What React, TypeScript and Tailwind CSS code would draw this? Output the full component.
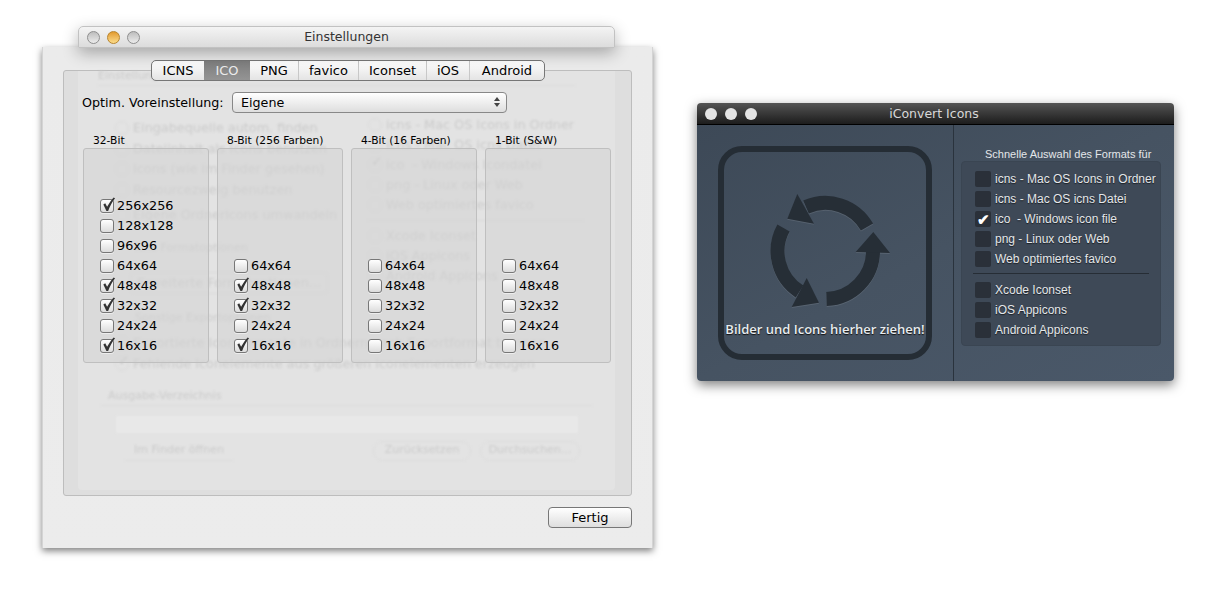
import React from 'react';

const ui = "font-['DejaVu_Sans',sans-serif]";

const TABS = [
  { label: 'ICNS', width: 'w-[52px]' },
  { label: 'ICO', width: 'w-[46px]', active: true },
  { label: 'PNG', width: 'w-[48px]' },
  { label: 'favico', width: 'w-[60px]' },
  { label: 'Iconset', width: 'w-[68px]' },
  { label: 'iOS', width: 'w-[43px]' },
  { label: 'Android', width: 'w-[75px]' },
];

const COLUMNS = [
  {
    title: '32-Bit',
    sizes: ['256x256', '128x128', '96x96', '64x64', '48x48', '32x32', '24x24', '16x16'],
    checked: ['256x256', '48x48', '32x32', '16x16'],
  },
  {
    title: '8-Bit (256 Farben)',
    sizes: ['64x64', '48x48', '32x32', '24x24', '16x16'],
    checked: ['48x48', '32x32', '16x16'],
  },
  { title: '4-Bit (16 Farben)', sizes: ['64x64', '48x48', '32x32', '24x24', '16x16'], checked: [] },
  { title: '1-Bit (S&W)', sizes: ['64x64', '48x48', '32x32', '24x24', '16x16'], checked: [] },
];

function CheckBox({ checked }: { checked: boolean }) {
  return (
    <span className="relative block w-[14px] h-[14px] shrink-0 rounded-[3px] border border-[#777] bg-linear-to-b from-white to-[#dcdcdc] shadow-[0_1px_0_rgba(255,255,255,0.5)]">
      {checked && (
        <svg viewBox="0 0 16 18" className="absolute left-0 -top-[5px] w-[15px] h-[17px]">
          <path d="M2.5 10 L4.5 8.8 L6.5 12.5 C8.5 9 10.5 5.5 13.5 2.5 L15 3.3 C12 7 9.5 12 7.6 17 L5.8 17 Z" fill="#333" />
        </svg>
      )}
    </span>
  );
}

function Traffic({ color }: { color: 'gray' | 'orange' }) {
  return (
    <span
      className={
        color === 'orange'
          ? 'block w-[13px] h-[13px] rounded-full border border-[#b8842c] bg-linear-to-b from-[#e29a2a] to-[#fbdc88]'
          : 'block w-[13px] h-[13px] rounded-full border border-[#8e8e8e] bg-linear-to-b from-[#bdbdbd] to-[#ececec]'
      }
    />
  );
}

function GhostRow({ text, checked, className }: { text: string; checked?: boolean; className?: string }) {
  return (
    <div className={`flex items-center h-[20px] gap-[4px] ${className ?? ''}`}>
      <span className="relative block w-[14px] h-[14px] rounded-full border border-[#dadada] shrink-0">
        {checked && <span className="absolute left-[2px] -top-[5px] text-[14px] leading-none text-[#c4c4c4]">✓</span>}
      </span>
      <span className="whitespace-pre">{text}</span>
    </div>
  );
}

// blurred main window that shows through behind the sheet
function GhostWindow() {
  return (
    <div className="absolute left-[14px] right-[16px] top-0 bottom-[5px] rounded-b-[4px] bg-[#e3e3e3]">
      <div className="blur-[1px] text-[12.8px] text-[#cbcbcb] h-full">
        <div className="pl-[20px] h-[10px] text-[11px] leading-[10px]">Einstellungen</div>
        <div className="ml-[20px] mr-[40px] mt-[4px] h-px bg-[#dcdcdc]" />
        <div className="flex">
          <div className="w-[290px] pl-[37px] pt-[32px] shrink-0">
            <GhostRow text="Eingabequelle autom. finden" />
            <GhostRow text="Dateiinhalt als Icons benutzen" className="mt-[1px]" />
            <GhostRow text="Icons (wie im Finder gesehen)" />
            <GhostRow text="Resourcezweig benutzen" className="mt-[1px]" />
            <GhostRow text="Eigene Ordnericons umwandeln" className="mt-[5px]" />
          </div>
          <div className="pt-[29px]">
            <GhostRow text="icns - Mac OS Icons in Ordner" className="gap-[3px]" />
            <GhostRow text="icns - Mac OS icns Datei" className="gap-[3px]" />
            <GhostRow text="ico  - Windows Icondatei" checked className="gap-[3px]" />
            <GhostRow text="png - Linux oder Web" className="gap-[3px]" />
            <GhostRow text="Web optimiertes favico" className="gap-[3px]" />
            <div className="h-px w-[215px] bg-[#d8d8d8] mt-[5px]" />
            <GhostRow text="Xcode Iconset" className="mt-[5px] gap-[3px]" />
            <GhostRow text="iOS Appicons" className="gap-[3px]" />
            <GhostRow text="Android Appicons" className="gap-[3px]" />
          </div>
        </div>
        <div className="-mt-[46px] pl-[57px] text-[11px]">Icns Formatoptionen</div>
        <div className="mt-[15px] ml-[52px] w-[198px] h-[22px] rounded-[4px] border border-[#dadada] flex items-center justify-center whitespace-nowrap">
          Erweiterte Formatoptionen...
        </div>
        <div className="mt-[16px] pl-[57px] text-[11px]">Sonstige Exportoptionen</div>
        <div className="mt-[7px] pl-[37px]">
          <GhostRow text="Exportierte Iconelemente in Ordnern nach Exportformat trennen" />
          <GhostRow text="Fehlende Iconelemente aus größeren Iconelementen erzeugen" checked className="mt-[1px]" />
        </div>
        <div className="mt-[14px] pl-[30px] text-[11px]">Ausgabe-Verzeichnis</div>
        <div className="mx-[23px] h-px bg-[#dcdcdc]" />
        <div className="mt-[10px] ml-[38px] w-[462px] h-[17px] bg-[#e8e8e8]" />
        <div className="mt-[8px] ml-[47px] w-[455px] flex items-center text-[11px]">
          <span className="w-[108px] h-[20px] flex items-center justify-center border-b border-[#dcdcdc]">Im Finder öffnen</span>
          <span className="ml-auto w-[98px] h-[20px] flex items-center justify-center rounded-[10px] border border-[#dcdcdc]">Zurücksetzen</span>
          <span className="ml-[9px] w-[100px] h-[20px] flex items-center justify-center rounded-[10px] border border-[#dcdcdc]">Durchsuchen...</span>
        </div>
      </div>
    </div>
  );
}

function SettingsSheet() {
  return (
    <div className={`absolute left-[42px] top-[47px] w-[611px] h-[501px] flex flex-col pl-[20px] pt-[23px] bg-linear-to-b from-[#ebebeb] to-[#ececec] border-x border-[#d4d4d4] shadow-[0_3px_7px_rgba(0,0,0,0.5)] text-black ${ui}`}>
      <div className="relative w-[569px] h-[426px] rounded-[3px] border border-[#bdbdbd] bg-[#dedede] flex flex-col">
        <GhostWindow />

        <div className="relative self-center ml-[1px] -mt-[11px] flex h-[21px] rounded-[5px] border border-[#777] bg-linear-to-b from-white to-[#e4e4e4] overflow-hidden text-[13px]">
          {TABS.map((tab, i) => (
            <div
              key={tab.label}
              className={`${tab.width} flex items-center justify-center ${
                tab.active
                  ? 'bg-linear-to-b from-[#7d7d7d] to-[#949494] text-[#ececec]'
                  : i > 2
                    ? 'border-l border-[#c8c8c8]'
                    : ''
              }`}
            >
              {tab.label}
            </div>
          ))}
        </div>

        <div className="relative flex items-center mt-[11px] pl-[18px] h-[21px]">
          <span className="w-[150px] text-[12.7px] whitespace-nowrap">Optim. Voreinstellung:</span>
          <div className="relative w-[275px] h-[21px] rounded-[4px] border border-[#888] bg-linear-to-b from-white to-[#dedede] flex items-center pl-[8px] text-[12.7px]">
            Eigene
            <span className="absolute right-[6px] top-[4px] flex flex-col gap-[2px]">
              <span className="block w-0 h-0 border-x-[3px] border-x-transparent border-b-[4px] border-b-[#444]" />
              <span className="block w-0 h-0 border-x-[3px] border-x-transparent border-t-[4px] border-t-[#444]" />
            </span>
          </div>
        </div>

        <div className="relative grid grid-cols-[126px_126px_126px_126px] gap-x-[8px] ml-[19px] mt-[20px]">
          {COLUMNS.map((col) => (
            <div key={col.title} className="flex flex-col">
              <div className="h-[15px] pl-[10px] text-[10.7px] leading-[16px] whitespace-nowrap">{col.title}</div>
              <div className="h-[215px] rounded-[3px] border border-[#bfbfbf] bg-[#d3d3d3]/60 flex flex-col justify-end pb-[6px] pl-[16px]">
                {col.sizes.map((size) => (
                  <div key={size} className="h-[20px] flex items-center text-[12.8px]">
                    <CheckBox checked={col.checked.includes(size)} />
                    <span className="ml-[3px]">{size}</span>
                  </div>
                ))}
              </div>
            </div>
          ))}
        </div>
      </div>

      <button className="self-end mr-[20px] mt-[11px] w-[84px] h-[21px] rounded-[4px] border border-[#777] bg-linear-to-b from-white to-[#dedede] text-[13px] flex items-center justify-center">
        Fertig
      </button>
    </div>
  );
}

function SettingsTitle() {
  return (
    <div className={`absolute left-[78px] top-[26px] w-[537px] h-[22px] rounded-t-[5px] border border-[#c2c2c2] bg-linear-to-b from-[#f4f4f4] to-[#dcdcdc] shadow-[0_5px_16px_rgba(0,0,0,0.3)] flex items-center pl-[8px] gap-[7px] ${ui}`}>
      <Traffic color="gray" />
      <Traffic color="orange" />
      <Traffic color="gray" />
      <span className="absolute inset-x-0 text-center text-[12.5px] text-[#333]">Einstellungen</span>
    </div>
  );
}

function ConvertArrows() {
  return (
    <svg viewBox="0 0 120 120" className="block mx-auto w-[120px] h-[120px] overflow-visible drop-shadow-[0_1px_0_rgba(255,255,255,0.1)]">
      <g fill="none" stroke="#262e36" strokeWidth="14">
        <path d="M102 36 A48 48 0 0 0 41 16" />
        <path d="M18.5 37 A48 48 0 0 0 34.5 100.5" />
        <path d="M61.5 108 A48 48 0 0 0 108 60" />
      </g>
      <g fill="#262e36">
        <polygon points="22.3,27.7 32.3,3 49,32.7" />
        <polygon points="41.7,87 26.7,116 54,111.7" />
        <polygon points="90.7,61 125,62 108.3,41" />
      </g>
    </svg>
  );
}

const FORMATS_TOP = [
  { label: 'icns - Mac OS Icons in Ordner' },
  { label: 'icns - Mac OS icns Datei' },
  { label: 'ico  - Windows icon file', checked: true },
  { label: 'png - Linux oder Web' },
  { label: 'Web optimiertes favico' },
];
const FORMATS_BOTTOM = [{ label: 'Xcode Iconset' }, { label: 'iOS Appicons' }, { label: 'Android Appicons' }];

function FormatRow({ label, checked }: { label: string; checked?: boolean }) {
  return (
    <div className="h-[20px] flex items-center">
      <span className="w-[16px] h-[16px] rounded-[2px] bg-[#2a3039] flex items-center justify-center shrink-0 text-white text-[15px] font-bold leading-none">
        {checked ? '✔' : ''}
      </span>
      <span className="ml-[4px] whitespace-pre text-[12px] text-[#e4e7ea] [text-shadow:0_1px_1px_rgba(0,0,0,0.6)]">{label}</span>
    </div>
  );
}

function IConvertWindow() {
  return (
    <div className="absolute left-[697px] top-[103px] w-[477px] h-[278px] rounded-[4px] overflow-hidden shadow-[0_4px_12px_rgba(0,0,0,0.5)] flex flex-col">
      <div className="relative h-[22px] shrink-0 flex items-center pl-[8px] gap-[8px] bg-linear-to-b from-[#555] to-[#1d1d1d] border-b border-black">
        <span className="block w-[12px] h-[12px] rounded-full bg-[#e4e4e4]" />
        <span className="block w-[12px] h-[12px] rounded-full bg-[#e4e4e4]" />
        <span className="block w-[12px] h-[12px] rounded-full bg-[#e4e4e4]" />
        <span className={`absolute inset-x-0 pr-[3px] translate-y-[1px] text-center text-[12.5px] text-[#d8d8d8] ${ui}`}>iConvert Icons</span>
      </div>
      <div className="flex-1 flex bg-linear-to-br from-[#3d4957] via-[#465362] to-[#4a5869]">
        <div className="w-[257px] border-r border-[#2a333d] pl-[21px] pt-[21px]">
          <div className="w-[214px] h-[214px] rounded-[24px] border-[6px] border-[#252d35] pt-[39px]">
            <ConvertArrows />
            <div className="mt-[9px] text-center font-['Open_Sans',sans-serif] text-[13px] leading-[18px] font-semibold whitespace-nowrap text-[#e8ecef] [text-shadow:0_1px_1px_#111]">
              Bilder und Icons hierher ziehen!
            </div>
          </div>
        </div>
        <div className="flex-1 pl-[7px] font-['Liberation_Sans',sans-serif]">
          <div className="pt-[22px] pl-[24px] h-[36px] text-[11px] leading-[14px] text-[#e4e7ea] whitespace-nowrap">
            Schnelle Auswahl des Formats für
          </div>
          <div className="w-[200px] h-[185px] rounded-[4px] border border-[#3a4552] bg-[#3e4957] pl-[13px] pt-[7px]">
            {FORMATS_TOP.map((f) => (
              <FormatRow key={f.label} {...f} />
            ))}
            <div className="w-[176px] h-px -ml-[2px] mt-[4px] mb-[6px] bg-[#262d35]" />
            {FORMATS_BOTTOM.map((f) => (
              <FormatRow key={f.label} {...f} />
            ))}
          </div>
        </div>
      </div>
    </div>
  );
}

export default function App() {
  return (
    <div className="relative w-[1225px] h-[596px] bg-white overflow-hidden">
      <SettingsSheet />
      <SettingsTitle />
      <IConvertWindow />
    </div>
  );
}
